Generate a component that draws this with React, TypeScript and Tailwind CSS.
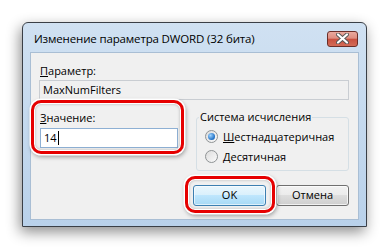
import React from 'react';

const font = { fontFamily: '"Open Sans", "Noto Sans", sans-serif' };

function Radio({ checked, children }: { checked?: boolean; children: React.ReactNode }) {
  return (
    <div className="flex items-center gap-[5px] h-[16px]">
      <div className="w-[13px] h-[13px] rounded-full border border-[#8f9395] bg-gradient-to-br from-[#dcdcdc] to-[#fbfbfb] flex items-center justify-center">
        {checked && (
          <div className="w-[7px] h-[7px] rounded-full bg-[radial-gradient(circle_at_35%_35%,#9fd4ff,#1f6fc4_70%,#0d4a8e)]" />
        )}
      </div>
      <span className="text-[11px] leading-none text-black">{children}</span>
    </div>
  );
}

function Button({ primary, children }: { primary?: boolean; children: React.ReactNode }) {
  return (
    <div
      className={
        primary
          ? 'w-[73px] h-[21px] rounded-[3px] border border-[#3c7fb1] bg-[linear-gradient(#e9f6fd_0%,#d9f0fc_50%,#bee6fd_50%,#a7d9f5_100%)] shadow-[inset_0_0_0_1px_rgba(255,255,255,0.6)] flex items-center justify-center text-[11px] text-black'
          : 'w-[73px] h-[21px] rounded-[3px] border border-[#707070] bg-[linear-gradient(#f2f2f2_0%,#ebebeb_50%,#dddddd_50%,#cfcfcf_100%)] shadow-[inset_0_0_0_1px_rgba(255,255,255,0.7)] flex items-center justify-center text-[11px] text-black'
      }
    >
      {children}
    </div>
  );
}

export default function App() {
  return (
    <div className="w-[389px] h-[249px] bg-white pt-[22px] pl-[22px]" style={font}>
      <div className="w-[345px] h-[205px] rounded-t-[6px] border border-[#3a3f46] bg-gradient-to-b from-[#d0e1f2] to-[#b9d1ea] shadow-[-2px_5px_14px_rgba(0,0,0,0.45)] flex flex-col px-[7px] pb-[6px]">
        <div className="h-[29px] flex items-center justify-between pl-[4px] pr-[1px]">
          <span className="text-[11.5px] tracking-[-0.15px] text-black leading-none mt-[2px]">Изменение параметра DWORD (32 бита)</span>
          <div className="w-[31px] h-[16px] mt-[2px] rounded-[3px] border border-[#6b2e28] bg-[linear-gradient(#e9a99e_0%,#de8d80_45%,#c8503f_50%,#d36b57_100%)] flex items-center justify-center">
            <svg width="13" height="11" viewBox="0 0 13 11">
              <path d="M2 1.5 L11 9.5 M11 1.5 L2 9.5" stroke="#555" strokeWidth="4" strokeLinecap="round" />
              <path d="M2 1.5 L11 9.5 M11 1.5 L2 9.5" stroke="#fff" strokeWidth="2.2" strokeLinecap="round" />
            </svg>
          </div>
        </div>
        <div className="relative flex-1 bg-[#f0f0f0] border border-[#a9bed4] pl-[8px] pr-[9px] pt-[12px]">
          <div className="h-[12px] text-[11px] leading-[12px] text-black pl-[1px]">
            <span className="underline">П</span>араметр:
          </div>
          <div className="mt-[3px] h-[20px] border border-[#c9cdd2] bg-[#f0f0f0] flex items-center pl-[3px] text-[11px] text-black">
            MaxNumFilters
          </div>
          <div className="flex mt-[11px]">
            <div className="w-[140px] pl-[1px] pt-[1px]">
              <div className="h-[12px] text-[11px] leading-[12px] text-black">
                <span className="underline">З</span>начение:
              </div>
              <div className="mt-[4px] w-[138px] h-[20px] border border-[#8eb0d4] bg-white flex items-center pl-[3px] text-[11px] text-black">
                14<span className="inline-block w-[1px] h-[14px] bg-black ml-[1px]" />
              </div>
            </div>
            <div className="ml-[17px] flex-1 relative mt-[6px] h-[54px] rounded-[3px] border border-[#d5dfe5] pl-[8px] pt-[10px] flex flex-col gap-[4px]">
              <span className="absolute -top-[7px] left-[2px] bg-[#f0f0f0] px-[1px] text-[11px] leading-[12px] text-black">Система исчисления</span>
              <Radio checked>
                <span className="underline">Ш</span>естнадцатеричная
              </Radio>
              <Radio>
                <span className="underline">Д</span>есятичная
              </Radio>
            </div>
          </div>
          <div className="flex justify-end gap-[10px] mt-[14px]">
            <Button primary>OK</Button>
            <Button>Отмена</Button>
          </div>
          <div className="absolute left-[0px] top-[47px] w-[153px] h-[54px] rounded-[10px] border-[3px] border-[#e60000] shadow-[0_0_0_1.5px_#fff,1px_2px_4px_1px_rgba(0,0,0,0.35),inset_0_0_0_1px_#fff,inset_0_0_3px_1px_rgba(0,0,0,0.25)]" />
          <div className="absolute left-[154px] top-[123px] w-[90px] h-[37px] rounded-[10px] border-[3px] border-[#e60000] shadow-[0_0_0_1.5px_#fff,1px_2px_4px_1px_rgba(0,0,0,0.35),inset_0_0_0_1px_#fff,inset_0_0_3px_1px_rgba(0,0,0,0.25)]" />
        </div>
      </div>
    </div>
  );
}
